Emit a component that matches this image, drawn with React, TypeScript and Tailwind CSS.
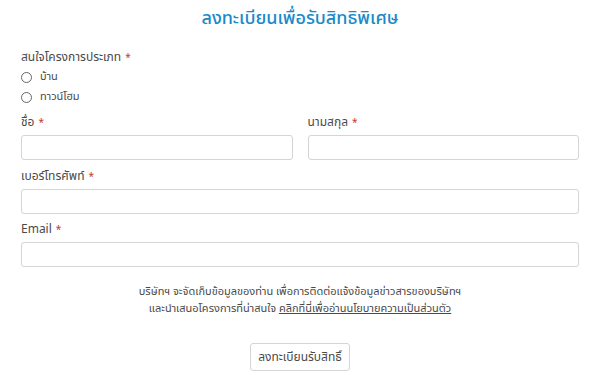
import React from "react";

const Req = () => <span className="text-[#c0392b] ml-1 text-[10px]">*</span>;

const Field = ({ label, className = "" }: { label: string; className?: string }) => (
  <div className={className}>
    <label className="block text-[12px] text-[#4a4a4a] h-[20px] leading-[20px]">
      {label}
      <Req />
    </label>
    <input
      type="text"
      className="mt-[3px] block w-full h-[25px] border border-[#d4d4d4] rounded-[3px] bg-white focus:outline-none"
    />
  </div>
);

const App = () => {
  return (
    <div
      className="w-[600px] h-[386px] bg-white px-[21px] text-[#4a4a4a]"
      style={{ fontFamily: '"Noto Sans Thai", "Noto Sans", "DejaVu Sans", sans-serif' }}
    >
      <h1 className="text-center text-[18px] font-medium text-[#1a8ac9] pt-[6px] h-[40px] leading-[26px]">
        ลงทะเบียนเพื่อรับสิทธิพิเศษ
      </h1>
      <div className="text-[12px] h-[20px] leading-[20px] mt-[7px]">
        สนใจโครงการประเภท
        <Req />
      </div>
      <div className="flex flex-col">
        {["บ้าน", "ทาวน์โฮม"].map((t) => (
          <label key={t} className="flex items-center h-[20px] text-[11px]">
            <span className="w-[11px] h-[11px] rounded-full border border-[#666] inline-block" />
            <span className="ml-[8px]">{t}</span>
          </label>
        ))}
      </div>
      <div className="flex gap-[15px] mt-[5px]">
        <Field label="ชื่อ" className="flex-1" />
        <Field label="นามสกุล" className="flex-1" />
      </div>
      <Field label="เบอร์โทรศัพท์" className="mt-[6px]" />
      <Field label="Email" className="mt-[5px]" />
      <div className="text-center text-[11px] leading-[17px] mt-[16px]">
        <p>บริษัทฯ จะจัดเก็บข้อมูลของท่าน เพื่อการติดต่อแจ้งข้อมูลข่าวสารของบริษัทฯ</p>
        <p>
          และนำเสนอโครงการที่น่าสนใจ{" "}
          <a href="#" className="underline">
            คลิกที่นี่เพื่ออ่านนโยบายความเป็นส่วนตัว
          </a>
        </p>
      </div>
      <div className="flex justify-center mt-[26px]">
        <button className="w-[100px] h-[28px] border border-[#d4d4d4] rounded-[3px] bg-white text-[12px] text-[#4a4a4a]">
          ลงทะเบียนรับสิทธิ์
        </button>
      </div>
    </div>
  );
};

export default App;
